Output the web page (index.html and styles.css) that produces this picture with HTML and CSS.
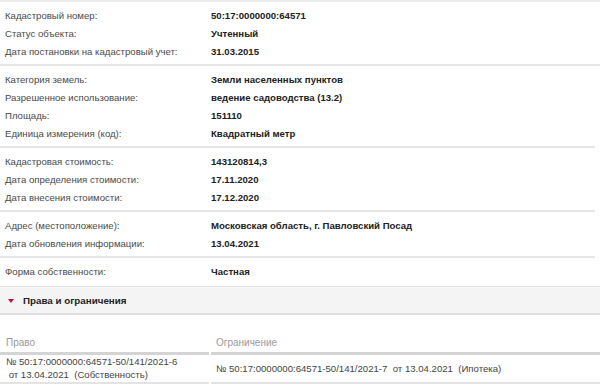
FILE: index.html
```html
<!DOCTYPE html>
<html lang="ru">
<head>
<meta charset="utf-8">
<link rel="stylesheet" href="styles.css">
</head>
<body>
<div class="page">
  <div class="section first">
    <div class="row"><span class="label">Кадастровый номер:</span><span class="value">50:17:0000000:64571</span></div>
    <div class="row"><span class="label">Статус объекта:</span><span class="value">Учтенный</span></div>
    <div class="row"><span class="label">Дата постановки на кадастровый учет:</span><span class="value">31.03.2015</span></div>
  </div>
  <div class="section">
    <div class="row"><span class="label">Категория земель:</span><span class="value">Земли населенных пунктов</span></div>
    <div class="row"><span class="label">Разрешенное использование:</span><span class="value">ведение садоводства (13.2)</span></div>
    <div class="row"><span class="label">Площадь:</span><span class="value">151110</span></div>
    <div class="row"><span class="label">Единица измерения (код):</span><span class="value">Квадратный метр</span></div>
  </div>
  <div class="section">
    <div class="row"><span class="label">Кадастровая стоимость:</span><span class="value">143120814,3</span></div>
    <div class="row"><span class="label">Дата определения стоимости:</span><span class="value">17.11.2020</span></div>
    <div class="row"><span class="label">Дата внесения стоимости:</span><span class="value">17.12.2020</span></div>
  </div>
  <div class="section">
    <div class="row"><span class="label">Адрес (местоположение):</span><span class="value">Московская область, г. Павловский Посад</span></div>
    <div class="row"><span class="label">Дата обновления информации:</span><span class="value">13.04.2021</span></div>
  </div>
  <div class="section last">
    <div class="row"><span class="label">Форма собственности:</span><span class="value">Частная</span></div>
  </div>
  <div class="band">
    <span class="caret"></span><span class="band-title">Права и ограничения</span>
  </div>
  <div class="table">
    <div class="th">Право</div>
    <div class="th">Ограничение</div>
    <div class="td">№ 50:17:0000000:64571-50/141/2021-6<br>&nbsp;от 13.04.2021&nbsp; (Собственность)</div>
    <div class="td mid">№ 50:17:0000000:64571-50/141/2021-7&nbsp; от 13.04.2021&nbsp; (Ипотека)</div>
  </div>
</div>
</body>
</html>
```

FILE: styles.css
```css
html, body {
  margin: 0;
  padding: 0;
  background: #ffffff;
}
body {
  font-family: "Liberation Sans", Arial, sans-serif;
  font-size: 9.6px;
  color: #444444;
}
.page {
  width: 600px;
}
.section {
  padding: 4px 0;
  border-bottom: 2px solid #e6e6e6;
  margin-right: 5px;
}
.section.first {
  border-top: 2px solid #ececec;
  margin-right: 0;
}
.section.last {
  margin-right: 0;
  padding-bottom: 6px;
  border-bottom: 1px solid #e2e2e2;
}
.row {
  display: grid;
  grid-template-columns: 206px 1fr;
  height: 18px;
  align-items: center;
  padding-left: 5px;
}
.label {
  color: #4a4a4a;
}
.value {
  font-weight: bold;
  color: #222222;
}
.band {
  display: flex;
  align-items: center;
  height: 25px;
  background: #f4f4f4;
  border-top: 1px solid #f8f8f8;
  border-bottom: 2px solid #dddddd;
  padding-left: 8px;
  font-size: 9.8px;
}
.caret {
  width: 0;
  height: 0;
  border-left: 3px solid transparent;
  border-right: 3px solid transparent;
  border-top: 4px solid #c0143c;
  margin-right: 9px;
}
.band-title {
  font-weight: bold;
  color: #222222;
}
.table {
  display: grid;
  grid-template-columns: 209px 1fr;
  column-gap: 2px;
  margin-top: 17px;
}
.th {
  color: #9a9a9a;
  height: 20px;
  display: flex;
  align-items: center;
  border-bottom: 3px solid #d4d4d4;
  padding-left: 6px;
  font-size: 10px;
}
.th + .th {
  padding-left: 5px;
}
.td {
  color: #444444;
  padding: 0 0 1px 6px;
  line-height: 13px;
  border-bottom: 2px solid #e3e3e3;
}
.td.mid {
  display: flex;
  align-items: center;
  padding-left: 5px;
}
```
